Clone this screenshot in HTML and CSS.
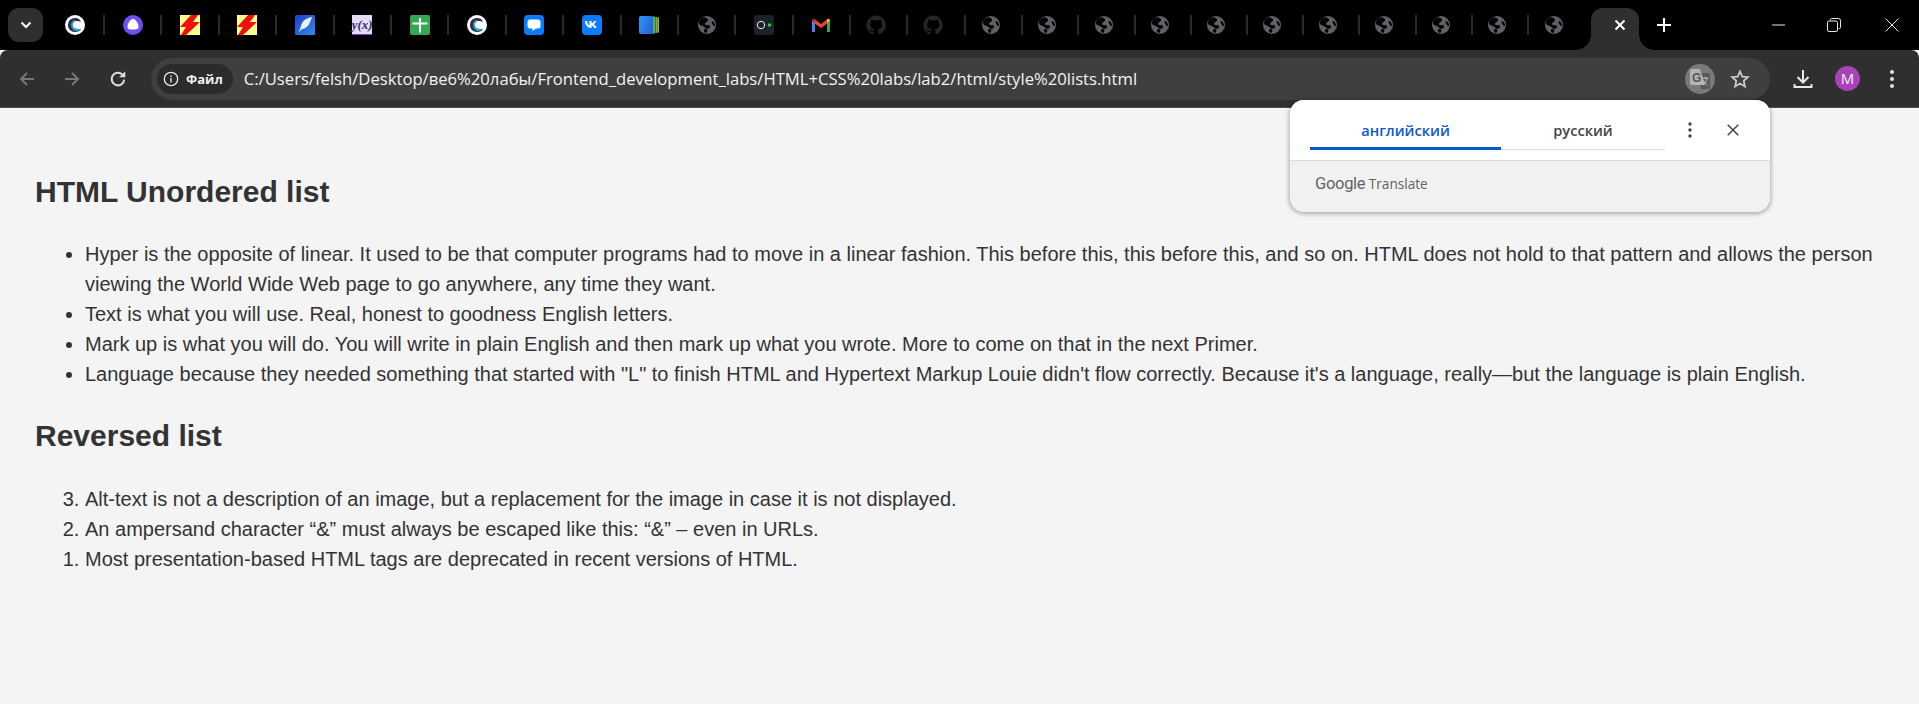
FILE: index.html
```html
<!DOCTYPE html>
<html lang="en">

<head>
  <meta charset="UTF-8">
  <title>Style lists</title>
  <link rel="stylesheet" href="styles.css">
</head>

<body>
  <!-- icon sprites -->
  <svg class="sprites" width="0" height="0">
    <symbol id="i-globe" viewBox="0 0 20 20">
      <circle cx="10" cy="10" r="9" fill="#5f6166"/>
      <path d="M5 3c3-1 6 0 6 2s-3 2-3 4 4 0 5 2-2 3-3 3-2-2-4-3-4-1-4-3 1-4 3-5zM15 6c1 0 3 2 3 4s-1 1-2 0-2-3-1-4zM8 14c2 0 3 1 2 3s-3 0-3-1 0-2 1-2z" fill="#000"/>
    </symbol>
    <symbol id="i-github" viewBox="0 0 20 20">
      <path d="M10 .6a9.6 9.6 0 0 0-3 18.7c.5.1.6-.2.6-.5v-1.7c-2.7.6-3.2-1.3-3.2-1.3-.4-1.100-1-1.400-1-1.400-.9-.6.1-.6.1-.6 1 .1 1.500 1 1.500 1 .9 1.500 2.300 1.100 2.900.8.1-.6.3-1.100.6-1.300-2.100-.2-4.400-1.100-4.400-4.700 0-1 .4-1.900 1-2.600-.1-.2-.4-1.200.1-2.500 0 0 .8-.3 2.600 1a9 9 0 0 1 4.800 0c1.800-1.300 2.600-1 2.600-1 .5 1.300.2 2.300.1 2.500.6.7 1 1.600 1 2.600 0 3.700-2.300 4.500-4.400 4.700.3.3.6.9.6 1.800v2.700c0 .3.2.6.7.5A9.600 9.600 0 0 0 10 .6z" fill="#24272b"/>
    </symbol>
    <symbol id="i-bolt" viewBox="0 0 20 20">
      <rect width="20" height="20" fill="#ffff8c"/>
      <path d="M11 0h7l-5 7h7L6 20H1l5-8H0L11 0z" fill="#f01010"/>
    </symbol>
    <symbol id="i-c" viewBox="0 0 20 20">
      <circle cx="10" cy="10" r="10" fill="#fff"/>
      <path d="M16 6.500A7 7 0 0 0 3 10c0 4 3 7 7 7 3 0 5-1 6-3-3 1-7 1-8-2-1-3 0-6 3-6 2 0 4 .5 5 .5z" fill="#2d2a4a"/>
      <path d="M6 10c0-3 2-5 5-5-2 1-3 3-3 5 0 3 3 4 8 4-2 2-4 2-6 2-2-1-4-3-4-6z" fill="#27a9c4"/>
    </symbol>
  </svg>

  <!-- tab strip -->
  <div class="tabstrip">
    <div class="tab-search">
      <svg width="12" height="8" viewBox="0 0 12 8"><path d="M1.500 1.500 6 6l4.500-4.500" fill="none" stroke="#fff" stroke-width="2"/></svg>
    </div>
    <div class="tabs">
      <div class="tab"><svg class="fav"><use href="#i-c"/></svg></div>
      <div class="tab">
        <svg class="fav" viewBox="0 0 20 20"><circle cx="10" cy="10" r="10" fill="#6f4ff0"/><path d="M10 4c3 0 5.500 5 5.500 8 0 2-1.500 2.500-5.500 2.500S4.500 14 4.500 12c0-3 2.500-8 5.500-8z" fill="#fff"/></svg>
      </div>
      <div class="tab"><svg class="fav"><use href="#i-bolt"/></svg></div>
      <div class="tab"><svg class="fav"><use href="#i-bolt"/></svg></div>
      <div class="tab">
        <svg class="fav" viewBox="0 0 20 20"><defs><linearGradient id="g-feather" x1="0" y1="0" x2="1" y2="1"><stop offset="0" stop-color="#1f3fc4"/><stop offset="1" stop-color="#2f8cf0"/></linearGradient></defs><rect width="20" height="20" rx="1.500" fill="url(#g-feather)"/><path d="M17 2c-6 1-10 4-11 9l-2 6 3-3c5 0 8-5 10-12z" fill="#e8f2ff"/></svg>
      </div>
      <div class="tab">
        <svg class="fav" viewBox="0 0 20 20"><rect width="20" height="20" fill="#e6dcfa"/><rect y="19" width="20" height="1" fill="#7a3fd0"/></svg>
        <span class="fav-yx">y(x)</span>
      </div>
      <div class="tab">
        <svg class="fav" viewBox="0 0 20 20"><rect width="20" height="20" rx="2" fill="#34a853"/><path d="M2.500 7.500h15v2h-15zM9 3h2v14.500H9z" fill="#fff"/></svg>
      </div>
      <div class="tab"><svg class="fav"><use href="#i-c"/></svg></div>
      <div class="tab">
        <svg class="fav" viewBox="0 0 20 20"><rect width="20" height="20" rx="4" fill="#0a7cff"/><path d="M6 4.500h8A2.500 2.500 0 0 1 16.500 7v4a2.500 2.500 0 0 1-2.500 2.500h-2L8.500 16v-2.500H6A2.500 2.500 0 0 1 3.500 11V7A2.500 2.500 0 0 1 6 4.500z" fill="#fff"/></svg>
      </div>
      <div class="tab">
        <svg class="fav" viewBox="0 0 20 20"><rect width="20" height="20" rx="4" fill="#0a7cff"/><path d="M3 6h2.200c.1 3 1.300 4.300 2.300 4.500V6h2.100v2.600c1-.1 2-1.300 2.400-2.600h2.100c-.3 1.600-1.500 2.800-2.400 3.300.9.400 2.300 1.500 2.800 3.700h-2.300c-.4-1.400-1.500-2.400-2.600-2.500V13h-.3C6 13 3.100 10.300 3 6z" fill="#fff"/></svg>
      </div>
      <div class="tab">
        <svg class="fav" viewBox="0 0 20 20"><defs><linearGradient id="g-pages" x1="0" y1="0" x2="1" y2="0.400"><stop offset="0" stop-color="#2a9cf0"/><stop offset="1" stop-color="#2a62e0"/></linearGradient></defs><path d="M13 1.500h3v17h-3z" fill="#3fb86a"/><path d="M16.500 2h1.300v16h-1.300z" fill="#b8d94a"/><path d="M18.500 2.500h1.300v15h-1.300z" fill="#e6e24a"/><rect y="1" width="14" height="18" rx="2" fill="url(#g-pages)"/></svg>
      </div>
      <div class="tab"><svg class="fav"><use href="#i-globe"/></svg></div>
      <div class="tab">
        <svg class="fav" viewBox="0 0 20 20"><rect width="20" height="20" rx="3" fill="#1b2229"/><circle cx="7" cy="10" r="3.700" fill="none" stroke="#e8e8e8" stroke-width="1"/><circle cx="15.500" cy="10" r="1.800" fill="#1fd63a"/></svg>
      </div>
      <div class="tab">
        <svg class="fav" viewBox="0 0 20 20"><path d="M1 17V5.500L4 4l0 13z" fill="#4285f4"/><path d="M19 17V5.500L16 4v13z" fill="#34a853"/><path d="M4 4.500 10 9l6-4.500v4.300L10 13 4 8.800z" fill="#ea4335"/><path d="M16 4.200c1.500-1 3-.3 3 1.500L16 8z" fill="#fbbc04"/><path d="M4 4.200C2.500 3.200 1 3.900 1 5.700L4 8z" fill="#c5221f"/></svg>
      </div>
      <div class="tab tab-shift"><svg class="fav"><use href="#i-github"/></svg></div>
      <div class="tab tab-shift"><svg class="fav"><use href="#i-github"/></svg></div>
      <div class="tab tab-shift"><svg class="fav"><use href="#i-globe"/></svg></div>
      <div class="tab tab-shift tab-slim"><svg class="fav"><use href="#i-globe"/></svg></div>
      <div class="tab tab-shift tab-slim"><svg class="fav"><use href="#i-globe"/></svg></div>
      <div class="tab tab-shift tab-slim"><svg class="fav"><use href="#i-globe"/></svg></div>
      <div class="tab tab-shift tab-slim"><svg class="fav"><use href="#i-globe"/></svg></div>
      <div class="tab tab-shift tab-slim"><svg class="fav"><use href="#i-globe"/></svg></div>
      <div class="tab tab-shift tab-slim"><svg class="fav"><use href="#i-globe"/></svg></div>
      <div class="tab tab-shift tab-slim"><svg class="fav"><use href="#i-globe"/></svg></div>
      <div class="tab tab-shift tab-slim"><svg class="fav"><use href="#i-globe"/></svg></div>
      <div class="tab tab-shift tab-slim"><svg class="fav"><use href="#i-globe"/></svg></div>
      <div class="tab tab-shift tab-slim tab-last"><svg class="fav"><use href="#i-globe"/></svg></div>
      <div class="tab-active">
        <svg width="12" height="12" viewBox="0 0 12 12"><path d="M1.500 1.500l9 9M10.500 1.500l-9 9" stroke="#fff" stroke-width="2"/></svg>
      </div>
      <div class="tab-new">
        <svg width="14" height="14" viewBox="0 0 14 14"><path d="M7 0v14M0 7h14" stroke="#fff" stroke-width="2"/></svg>
      </div>
    </div>
    <div class="win-controls">
      <svg width="14" height="14" viewBox="0 0 14 14"><path d="M0 7h13" stroke="#e8e8e8"/></svg>
      <svg width="14" height="14" viewBox="0 0 14 14"><rect x=".5" y="3" width="10" height="10.500" rx="1.500" fill="none" stroke="#e8e8e8"/><path d="M3.500 2.500v-1a1 1 0 0 1 1-1h7a2 2 0 0 1 2 2v7a1 1 0 0 1-1 1h-1" fill="none" stroke="#e8e8e8"/></svg>
      <svg class="win-close" width="14" height="14" viewBox="0 0 14 14"><path d="M.5.500l13 13M13.500.500l-13 13" stroke="#e8e8e8"/></svg>
    </div>
  </div>

  <!-- toolbar -->
  <div class="toolbar">
    <svg class="nav-icon" width="16" height="16" viewBox="0 0 16 16"><path d="M15 8H2M8 2 2 8l6 6" fill="none" stroke="#777" stroke-width="2"/></svg>
    <svg class="nav-icon" width="16" height="16" viewBox="0 0 16 16"><path d="M1 8h13M8 2l6 6-6 6" fill="none" stroke="#777" stroke-width="2"/></svg>
    <svg class="nav-icon nav-reload" width="18" height="18" viewBox="0 0 16 16"><path d="M13.500 8.500a5.600 5.600 0 1 1-1.600-4.400" fill="none" stroke="#ddd" stroke-width="1.800"/><path d="M14.500 1v5.500H9z" fill="#ddd"/></svg>
    <div class="omnibox">
      <div class="chip">
        <svg width="16" height="16" viewBox="0 0 16 16"><circle cx="8" cy="8" r="6.700" fill="none" stroke="#e8e8e8" stroke-width="1.300"/><path d="M7.300 7h1.400v4.500H7.300zM7.300 4.500h1.400v1.400H7.300z" fill="#e8e8e8"/></svg>
        <span>Файл</span>
      </div>
      <span class="url">C:/Users/felsh/Desktop/ве6%20лабы/Frontend_development_labs/HTML+CSS%20labs/lab2/html/style%20lists.html</span>
      <div class="translate-btn">
        <svg width="22" height="22" viewBox="0 0 22 22"><path d="M10 5h9.500A1.500 1.500 0 0 1 21 6.500v13a1.500 1.500 0 0 1-1.500 1.500H12z" fill="#5a5a5a"/><path d="M2.500 1h8.500l5 16H2.500A1.500 1.500 0 0 1 1 15.500v-13A1.500 1.500 0 0 1 2.500 1z" fill="#b4b4b4"/><path d="M13 10h6.500M16 9v1.500M18 10.500c-.5 2.500-2.500 5-4.500 6M14.500 12.500c.7 1.500 2.500 3.500 4 4.500" fill="none" stroke="#c4c4c4"/></svg>
        <span class="translate-g">G</span>
      </div>
      <svg class="star" width="20" height="20" viewBox="0 0 20 20"><path d="M10 2.300l2.300 5.300 5.700.5-4.300 3.800 1.300 5.600-5-3-5 3 1.300-5.600L2 8.100l5.700-.5z" fill="none" stroke="#ccc" stroke-width="1.700"/></svg>
    </div>
    <svg class="download" width="20" height="20" viewBox="0 0 20 20"><path d="M10 1v12M4.500 8l5.500 5.500L15.500 8M1.500 15v3h17v-3" fill="none" stroke="#e8e8e8" stroke-width="2"/></svg>
    <div class="avatar">M</div>
    <svg class="kebab" width="4" height="20" viewBox="0 0 4 20"><circle cx="2" cy="3" r="2" fill="#e0e0e0"/><circle cx="2" cy="10" r="2" fill="#e0e0e0"/><circle cx="2" cy="17" r="2" fill="#e0e0e0"/></svg>
  </div>

  <!-- translate bubble -->
  <div class="bubble">
    <div class="bubble-top">
      <div class="lang-tabs">
        <div class="lang lang-on">английский</div>
        <div class="lang">русский</div>
      </div>
      <svg class="bubble-dots" width="4" height="16" viewBox="0 0 4 16"><circle cx="2" cy="2" r="1.700" fill="#444"/><circle cx="2" cy="8" r="1.700" fill="#444"/><circle cx="2" cy="14" r="1.700" fill="#444"/></svg>
      <svg class="bubble-x" width="12" height="12" viewBox="0 0 12 12"><path d="M.7.700l10.600 10.600M11.300.700.700 11.300" stroke="#444" stroke-width="1.500"/></svg>
    </div>
    <div class="bubble-foot"><span class="brand-g">Google</span> <span class="brand-t">Translate</span></div>
  </div>

  <!-- page -->
  <main class="page">
    <h2>HTML Unordered list</h2>
    <ul>
      <li>Hyper is the opposite of linear. It used to be that computer programs had to move in a linear fashion. This before this, this before this, and so on. HTML does not hold to that pattern and allows the person viewing the World Wide Web page to go anywhere, any time they want.</li>
      <li>Text is what you will use. Real, honest to goodness English letters.</li>
      <li>Mark up is what you will do. You will write in plain English and then mark up what you wrote. More to come on that in the next Primer.</li>
      <li>Language because they needed something that started with "L" to finish HTML and Hypertext Markup Louie didn't flow correctly. Because it's a language, really—but the language is plain English.</li>
    </ul>
    <h2>Reversed list</h2>
    <ol reversed>
      <li>Alt-text is not a description of an image, but a replacement for the image in case it is not displayed.</li>
      <li>An ampersand character “&amp;” must always be escaped like this: “&amp;” – even in URLs.</li>
      <li>Most presentation-based HTML tags are deprecated in recent versions of HTML.</li>
    </ol>
  </main>
</body>

</html>
```

FILE: styles.css
```css
/* page frame */
html,
body {
  margin: 0;
  height: 100%;
}

body {
  position: relative;
  overflow: hidden;
  background-color: #f4f4f4;
  font-family: "Liberation Sans", Arial, sans-serif;
}

.sprites {
  display: block;
  height: 0;
}

/* tab strip */
.tabstrip {
  display: flex;
  align-items: center;
  height: 50px;
  background-color: #000;
}

.tab-search {
  display: flex;
  align-items: center;
  justify-content: center;
  flex: none;
  width: 35px;
  height: 34px;
  margin: 0 4.6px 0 8px;
  border-radius: 11px;
  background-color: #2f2f2f;
}

.tabs {
  display: flex;
  align-items: center;
  flex: 1;
  height: 50px;
}

.tab {
  position: relative;
  display: flex;
  align-items: center;
  justify-content: center;
  flex: none;
  width: 57.4px;
  height: 20px;
  border-right: 2px solid #2a2a2a;
  box-sizing: border-box;
}

.tab-shift {
  padding-right: 6px;
}

.tab-slim {
  width: 56.2px;
}

.tab-last {
  border-right: none;
}

.fav {
  display: block;
  flex: none;
  width: 20px;
  height: 20px;
}

.fav-yx {
  position: absolute;
  left: 50%;
  top: 2px;
  transform: translateX(-50%);
  font: italic bold 13px "Liberation Serif", serif;
  color: #3a2a70;
}

.tab-active {
  position: relative;
  display: flex;
  align-items: center;
  justify-content: center;
  flex: none;
  width: 48px;
  height: 42px;
  margin: 8px 0 0 5.4px;
  padding: 0 0 8px 10px;
  box-sizing: border-box;
  border-radius: 12px 12px 0 0;
  background-color: #2f2f2f;
}

/* flared feet of the active tab */
.tab-active::before,
.tab-active::after {
  content: "";
  position: absolute;
  bottom: 0;
  width: 15px;
  height: 15px;
}

.tab-active::before {
  left: -15px;
  background: radial-gradient(circle at 0 0, transparent 14.5px, #2f2f2f 15px);
}

.tab-active::after {
  right: -15px;
  background: radial-gradient(circle at 100% 0, transparent 14.5px, #2f2f2f 15px);
}

.tab-new {
  display: flex;
  margin-left: 18px;
}

.win-controls {
  display: flex;
  flex: none;
  gap: 41px;
  margin-right: 20px;
}

.win-close {
  margin-left: 3px;
}

/* toolbar */
.toolbar {
  display: flex;
  align-items: center;
  height: 57px;
  padding-left: 19px;
  border-bottom: 1px solid #4d4d4d;
  border-radius: 8px 8px 0 0;
  background-color: #2f2f2f;
}

.nav-icon {
  flex: none;
  margin-right: 29px;
}

.nav-reload {
  margin-right: 24px;
}

.omnibox {
  display: flex;
  align-items: center;
  flex: none;
  width: 1619px;
  height: 42px;
  box-sizing: border-box;
  padding: 0 20px 0 6px;
  border-radius: 21px;
  background-color: #3f3f3f;
}

.chip {
  display: flex;
  align-items: center;
  gap: 7px;
  height: 30px;
  padding: 0 10px 0 6px;
  border-radius: 15px;
  background-color: #2b2b2b;
  color: #f0f0f0;
  font: bold 13px "Open Sans", sans-serif;
}

.url {
  flex: 1;
  margin-left: 11px;
  color: #f2f2f2;
  font: 16.65px "Open Sans", sans-serif;
  white-space: nowrap;
}

.translate-btn {
  position: relative;
  display: flex;
  align-items: center;
  justify-content: center;
  flex: none;
  width: 30px;
  height: 30px;
  border-radius: 50%;
  background-color: #7a7a7a;
}

.translate-g {
  position: absolute;
  left: 7px;
  top: 7px;
  color: #555;
  font: bold 12px "Liberation Sans", sans-serif;
}

.star {
  flex: none;
  margin-left: 15px;
}

.download {
  flex: none;
  margin-left: 23px;
}

.avatar {
  flex: none;
  width: 25px;
  height: 25px;
  margin-left: 22px;
  border-radius: 50%;
  background-color: #a742b8;
  color: #f0f0f0;
  font: 15px/25px "Open Sans", sans-serif;
  text-align: center;
}

.kebab {
  flex: none;
  margin-left: 30px;
}

/* translate bubble */
.bubble {
  position: absolute;
  left: 1290px;
  top: 100px;
  width: 480px;
  height: 112px;
  border-radius: 14px;
  overflow: hidden;
  background-color: #f1f1f1;
  box-shadow: 0 1px 4px 1px rgba(0, 0, 0, 0.3);
}

.bubble-top {
  display: flex;
  align-items: center;
  height: 60px;
  padding-left: 20px;
  border-bottom: 1px solid #dcdcdc;
  background-color: #fff;
}

.lang-tabs {
  display: flex;
  align-self: flex-start;
  flex: none;
  width: 355px;
  height: 50px;
  box-sizing: border-box;
  border-bottom: 1px solid #dadada;
}

.lang {
  flex: 1;
  height: 50px;
  padding-top: 20px;
  box-sizing: border-box;
  color: #444;
  font: 600 14.6px/20px "Open Sans", sans-serif;
  text-align: center;
}

.lang-on {
  flex: none;
  width: 191px;
  border-bottom: 3px solid #0b57d0;
  color: #0b57d0;
}

.bubble-dots {
  flex: none;
  margin-left: 23px;
}

.bubble-x {
  flex: none;
  margin-left: 35px;
}

.bubble-foot {
  padding: 13px 25px;
  color: #5f6368;
  font: 13.6px "Open Sans", sans-serif;
}

.brand-g {
  font: 400 16.5px Roboto, sans-serif;
  letter-spacing: -0.3px;
}

/* page content */
.page {
  padding: 37px 35px 0;
  color: #333;
  font-size: 20px;
  line-height: 30px;
}

h2 {
  margin: 30px 0;
  font-size: 30px;
  line-height: 34px;
}

ul,
ol {
  margin: 0;
  padding-left: 50px;
}

ol {
  margin-top: 31px;
}
```
